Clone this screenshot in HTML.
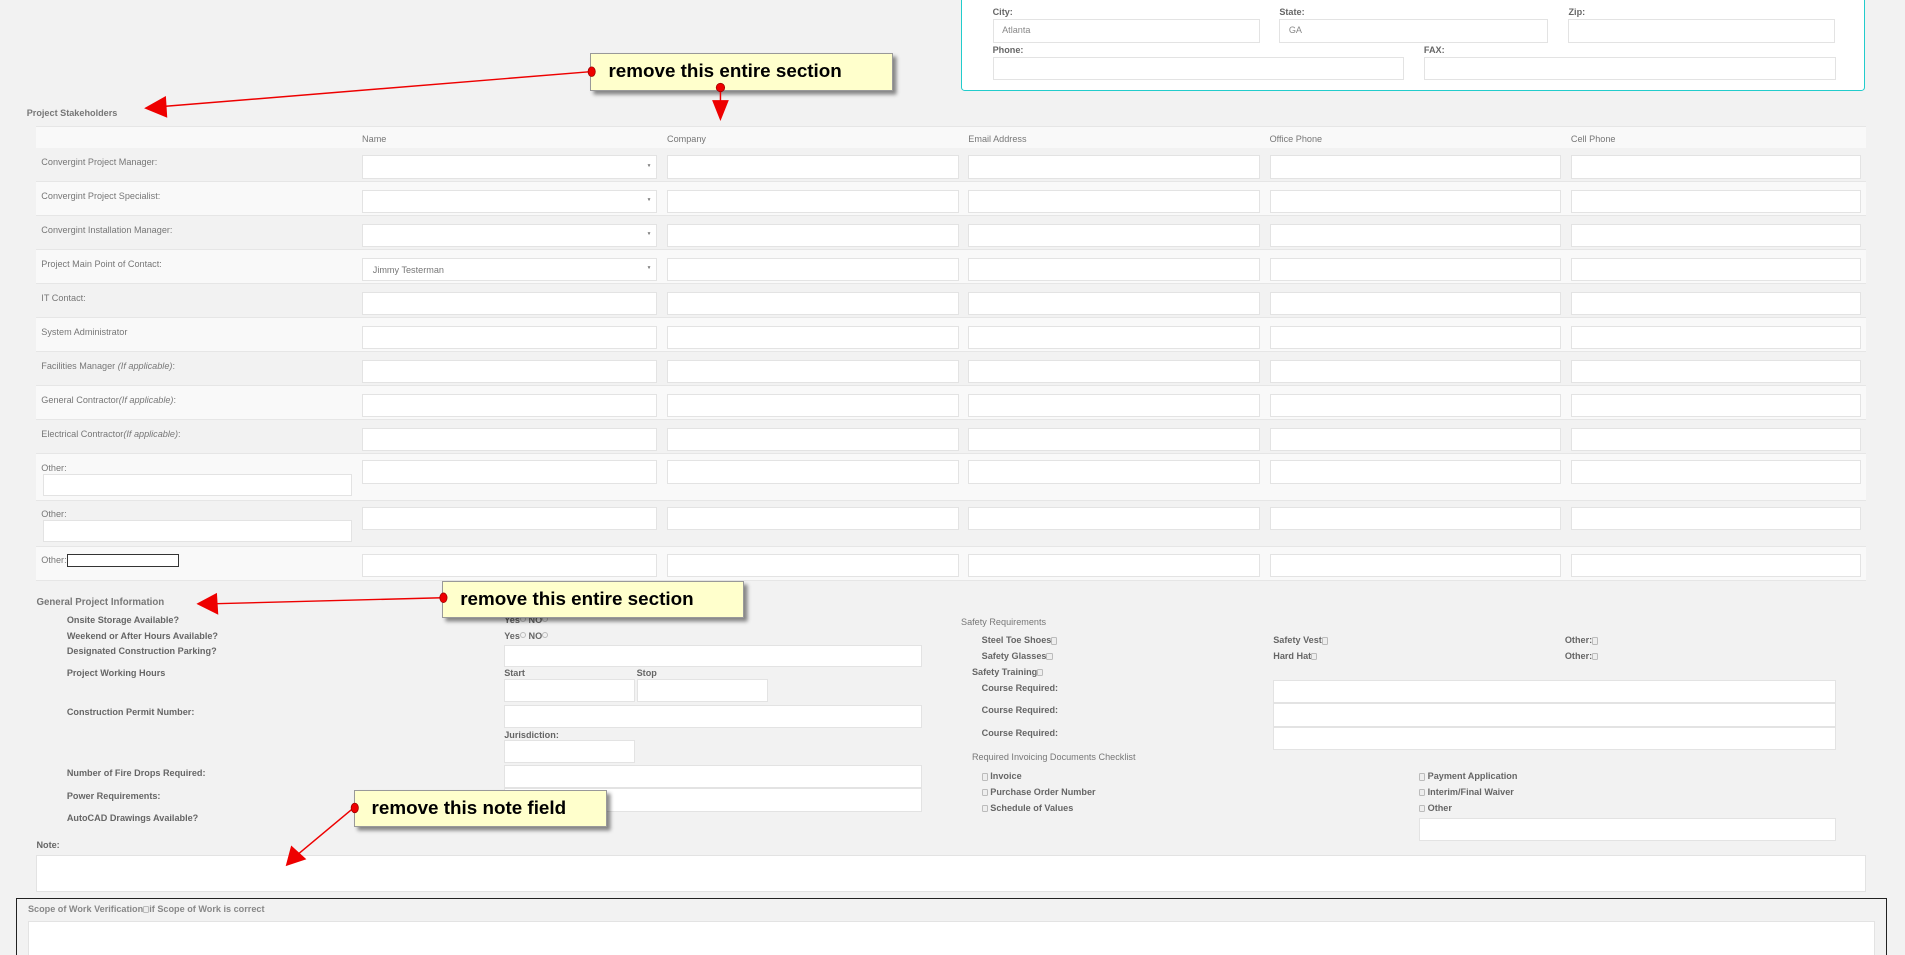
<!DOCTYPE html>
<html><head><meta charset="utf-8"><style>
*{box-sizing:border-box;margin:0;padding:0}
html,body{width:1905px;height:955px;overflow:hidden;background:#f2f2f2}
#w{zoom:1.21493;position:relative;width:1568px;height:786px;font-family:"Liberation Sans",sans-serif;font-size:7.5px;color:#777}
.a{position:absolute}
#w>.a,#w>.i{margin-top:1px}
.i{position:absolute;background:#fff;border:1px solid #e3e3e3}
.b{font-weight:bold;color:#666}
.cb{display:inline-block;width:5px;height:6px;border:1px solid #bbb;background:#eee;border-radius:1px;vertical-align:middle}
.rd{display:inline-block;width:5px;height:5px;border:1px solid #bbb;border-radius:50%;vertical-align:top;margin-top:1px}
.call{position:absolute;background:#ffffcc;border:1px solid #999;box-shadow:3px 3px 3px rgba(0,0,0,.45);font:bold 15.5px "Liberation Sans",sans-serif;color:#000;padding-left:14px;line-height:28px}
</style></head><body><div id="w">
<div class="a" style="left:791px;top:-4px;width:744px;height:79px;background:#fff;border:1px solid #2cc;border-radius:3px;margin-top:0"></div>
<div class="a b" style="left:817px;top:5px">City:</div>
<div class="a b" style="left:1053px;top:5px">State:</div>
<div class="a b" style="left:1291px;top:5px">Zip:</div>
<div class="i" style="left:817px;top:15px;width:220px;height:19px;padding:4px 7px;color:#888">Atlanta</div>
<div class="i" style="left:1053px;top:15px;width:221px;height:19px;padding:4px 7px;color:#888">GA</div>
<div class="i" style="left:1291px;top:15px;width:219px;height:19px"></div>
<div class="a b" style="left:817px;top:36px">Phone:</div>
<div class="a b" style="left:1172px;top:36px">FAX:</div>
<div class="i" style="left:817px;top:46px;width:339px;height:19px"></div>
<div class="i" style="left:1172px;top:46px;width:339px;height:19px"></div>

<div class="a b" style="left:22px;top:88px;color:#777">Project Stakeholders</div>
<div id="tbl"></div>

<div class="a b" style="left:30px;top:490px;color:#777;font-size:8px">General Project Information</div>
<div class="a b" style="left:55px;top:505px">Onsite Storage Available?</div>
<div class="a b" style="left:55px;top:518px">Weekend or After Hours Available?</div>
<div class="a b" style="left:55px;top:531px">Designated Construction Parking?</div>
<div class="a b" style="left:55px;top:549px">Project Working Hours</div>
<div class="a b" style="left:55px;top:581px">Construction Permit Number:</div>
<div class="a b" style="left:55px;top:631px">Number of Fire Drops Required:</div>
<div class="a b" style="left:55px;top:650px">Power Requirements:</div>
<div class="a b" style="left:55px;top:668px">AutoCAD Drawings Available?</div>
<div class="a b" style="left:415px;top:505px">Yes<span class="rd"></span> NO<span class="rd"></span></div>
<div class="a b" style="left:415px;top:518px">Yes<span class="rd"></span> NO<span class="rd"></span></div>
<div class="i" style="left:415px;top:530px;width:344px;height:18px"></div>
<div class="a b" style="left:415px;top:549px">Start</div>
<div class="a b" style="left:524px;top:549px">Stop</div>
<div class="i" style="left:415px;top:558px;width:108px;height:19px"></div>
<div class="i" style="left:524px;top:558px;width:108px;height:19px"></div>
<div class="i" style="left:415px;top:579px;width:344px;height:19px"></div>
<div class="a b" style="left:415px;top:600px">Jurisdiction:</div>
<div class="i" style="left:415px;top:608px;width:108px;height:19px"></div>
<div class="i" style="left:415px;top:629px;width:344px;height:19px"></div>
<div class="i" style="left:415px;top:648px;width:344px;height:19px"></div>

<div class="a" style="left:791px;top:507px">Safety Requirements</div>
<div class="a b" style="left:808px;top:522px">Steel Toe Shoes<span class="cb"></span></div>
<div class="a b" style="left:1048px;top:522px">Safety Vest<span class="cb"></span></div>
<div class="a b" style="left:1288px;top:522px">Other:<span class="cb"></span></div>
<div class="a b" style="left:808px;top:535px">Safety Glasses<span class="cb"></span></div>
<div class="a b" style="left:1048px;top:535px">Hard Hat<span class="cb"></span></div>
<div class="a b" style="left:1288px;top:535px">Other:<span class="cb"></span></div>
<div class="a b" style="left:800px;top:548px">Safety Training<span class="cb"></span></div>
<div class="a b" style="left:808px;top:561px">Course Required:</div>
<div class="a b" style="left:808px;top:579px">Course Required:</div>
<div class="a b" style="left:808px;top:598px">Course Required:</div>
<div class="i" style="left:1048px;top:559px;width:463px;height:19px"></div>
<div class="i" style="left:1048px;top:578px;width:463px;height:19px"></div>
<div class="i" style="left:1048px;top:597px;width:463px;height:19px"></div>
<div class="a" style="left:800px;top:618px">Required Invoicing Documents Checklist</div>
<div class="a b" style="left:808px;top:634px"><span class="cb"></span> Invoice</div>
<div class="a b" style="left:808px;top:647px"><span class="cb"></span> Purchase Order Number</div>
<div class="a b" style="left:808px;top:660px"><span class="cb"></span> Schedule of Values</div>
<div class="a b" style="left:1168px;top:634px"><span class="cb"></span> Payment Application</div>
<div class="a b" style="left:1168px;top:647px"><span class="cb"></span> Interim/Final Waiver</div>
<div class="a b" style="left:1168px;top:660px"><span class="cb"></span> Other</div>
<div class="i" style="left:1168px;top:672px;width:343px;height:19px"></div>

<div class="a b" style="left:30px;top:690px">Note:</div>
<div class="i" style="left:30px;top:703px;width:1506px;height:30px"></div>
<div class="a" style="left:13px;top:738px;width:1540px;height:60px;border:1px solid #222"></div>
<div class="a b" style="left:23px;top:743px;color:#888">Scope of Work Verification<span class="cb"></span>if Scope of Work is correct</div>
<div class="i" style="left:23px;top:757px;width:1520px;height:40px"></div>

<div class="call" style="left:486px;top:44px;width:249px;height:31px">remove this entire section</div>
<div class="call" style="left:364px;top:478px;width:248px;height:31px">remove this entire section</div>
<div class="call" style="left:291px;top:650px;width:209px;height:31px">remove this note field</div>
<svg class="a" style="left:0;top:0;margin:0" width="1568" height="786">
<g stroke="#e00" stroke-width="1.2" fill="#e00">
<line x1="486" y1="59" x2="130" y2="88"/><polygon points="120,89 136,80 137,96"/>
<line x1="593" y1="72" x2="593" y2="85"/><polygon points="593,98 587,83 599,83"/>
<line x1="364" y1="492" x2="174" y2="497"/><polygon points="163,497 178,489 179,505"/>
<line x1="291" y1="665" x2="243" y2="705"/><polygon points="236,712 240,697 251,707"/>
</g>
<g fill="#e00" stroke="#900" stroke-width=".6">
<ellipse cx="487" cy="59" rx="3" ry="4"/><ellipse cx="593" cy="72" rx="3.5" ry="3.5"/>
<ellipse cx="365" cy="492" rx="3" ry="4"/><ellipse cx="292" cy="665" rx="3" ry="4"/>
</g></svg>
</div>
<script>
var t='',rows=[["Convergint Project Manager:",1,""],["Convergint Project Specialist:",1,""],["Convergint Installation Manager:",1,""],["Project Main Point of Contact:",1,"Jimmy Testerman"],["IT Contact:",0],["System Administrator",0],["Facilities Manager <i>(If applicable)</i>:",0],["General Contractor<i>(If applicable)</i>:",0],["Electrical Contractor<i>(If applicable)</i>:",0]];
var cols=[[298,243],[549,240],[797,240],[1045,240],[1293,239]];
t+='<div class="a" style="left:30px;top:103px;width:1506px;height:19px;background:#f9f9f9;border-top:1px solid #e6e6e6;border-bottom:1px solid #e6e6e6"></div>';
["Name","Company","Email Address","Office Phone","Cell Phone"].forEach(function(h,k){t+='<div class="a" style="left:'+cols[k][0]+'px;top:109px">'+h+'</div>'});
var y=121;
function row(h,lab,sel,val,k,extra){
 t+='<div class="a" style="left:30px;top:'+y+'px;width:1506px;height:'+h+'px;background:'+(k%2?'#f9f9f9':'#f2f2f2')+';border-bottom:1px solid #e6e6e6"></div>';
 t+='<div class="a" style="left:34px;top:'+(y+7)+'px">'+lab+'</div>';
 if(extra)t+=extra;
 var iy=y+(h>30?5:6);
 cols.forEach(function(c,j){t+='<div class="i" style="left:'+c[0]+'px;top:'+iy+'px;width:'+c[1]+'px;height:19px;padding:5px 8px">'+(j==0&&val?val:'')+(j==0&&sel?'<span style="position:absolute;right:4px;top:6px;font-size:4px">&#9660;</span>':'')+'</div>'});
 y+=h;}
rows.forEach(function(r,k){row(28,r[0],r[1],r[2],k)});
row(38,"Other:",0,"",9,'<div class="i" style="left:35px;top:'+(y+16)+'px;width:255px;height:18px"></div>');
row(38,"Other:",0,"",10,'<div class="i" style="left:35px;top:'+(y+16)+'px;width:255px;height:18px"></div>');
row(28,"Other:",0,"",11,'<div class="a" style="left:55px;top:'+(y+6)+'px;width:92px;height:11px;background:#fff;border:1px solid #333"></div>');
document.getElementById('tbl').outerHTML=t;
</script>
</body></html>
